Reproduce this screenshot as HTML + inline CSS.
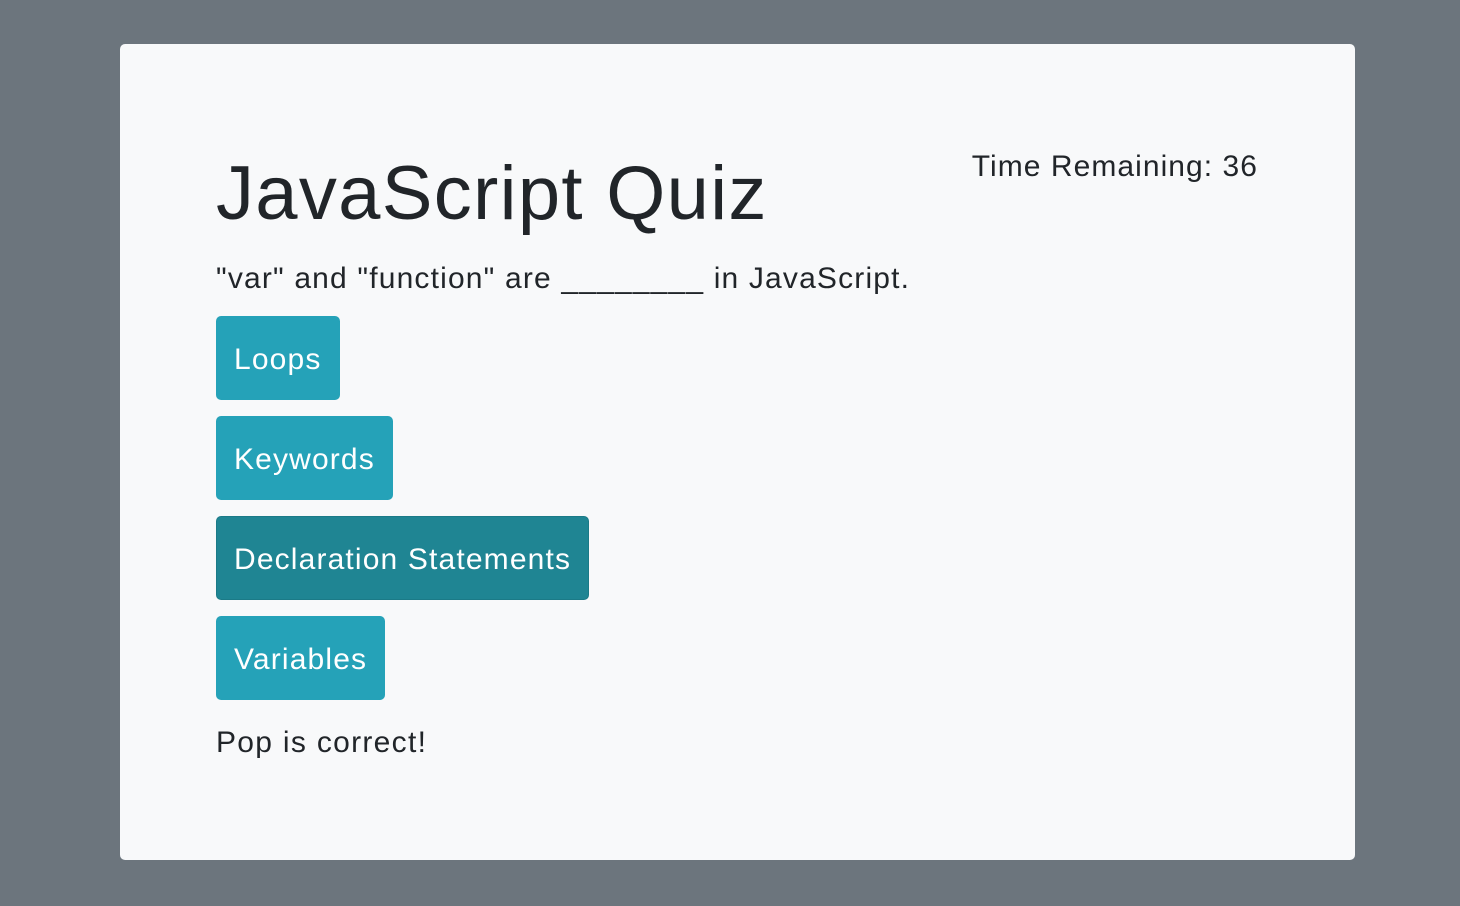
<!DOCTYPE html>
<html><head><style>
html,body{margin:0;padding:0;}
body{width:1460px;height:906px;background:#6c757d;font-family:"Liberation Sans",sans-serif;color:#212529;position:relative;overflow:hidden;}
.card{position:absolute;left:120px;top:44px;width:1235px;height:816px;background:#f8f9fa;border-radius:5px;}
h1{position:absolute;left:96px;top:112px;margin:0;font-size:76px;font-weight:400;line-height:1;letter-spacing:1.3px;}
.time{position:absolute;right:97px;top:106px;font-size:30px;letter-spacing:1.05px;}
.q{position:absolute;left:96px;top:218px;font-size:30px;letter-spacing:1.17px;}
.btn{position:absolute;left:96px;height:84px;line-height:88px;padding:0 18px;background:#25a2b8;color:#fff;font-size:30px;border-radius:5px;box-sizing:border-box;letter-spacing:1.15px;}
.btn.d{background:#1f8593;border:1px solid #1b7a87;padding:0 17px;line-height:86px;}
.r{position:absolute;left:96px;top:682px;font-size:30px;letter-spacing:1.3px;}
</style></head><body>
<div class="card">
<h1>JavaScript Quiz</h1>
<div class="time">Time Remaining: 36</div>
<div class="q">"var" and "function" are ________ in JavaScript.</div>
<div class="btn" style="top:272px">Loops</div>
<div class="btn" style="top:372px">Keywords</div>
<div class="btn d" style="top:472px">Declaration Statements</div>
<div class="btn" style="top:572px">Variables</div>
<div class="r">Pop is correct!</div>
</div>
</body></html>
